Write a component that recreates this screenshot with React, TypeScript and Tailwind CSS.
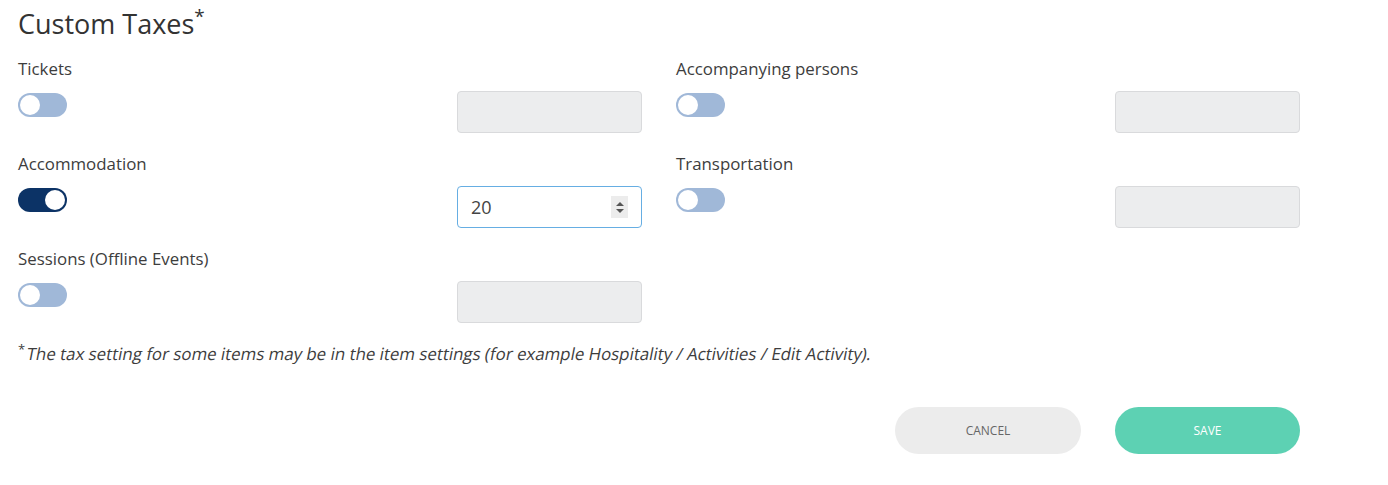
const font = { fontFamily: '"Open Sans", "Liberation Sans", sans-serif' };

type Item = { label: string; on?: boolean; value?: string };

const left: Item[] = [
  { label: "Tickets" },
  { label: "Accommodation", on: true, value: "20" },
  { label: "Sessions (Offline Events)" },
];

const right: Item[] = [{ label: "Accompanying persons" }, { label: "Transportation" }];

function Toggle({ on }: { on?: boolean }) {
  return (
    <div
      className={
        "mt-[2px] flex h-6 w-[49px] items-center rounded-full px-[2px] " +
        (on ? "justify-end bg-[#0c3366]" : "justify-start bg-[#a0b8d8]")
      }
    >
      <div className="h-5 w-5 rounded-full bg-white" />
    </div>
  );
}

function Field({ value }: { value?: string }) {
  if (value === undefined) {
    return <div className="h-[42px] w-[185px] rounded-[4px] border border-[#d9dadc] bg-[#ecedee]" />;
  }
  return (
    <div className="flex h-[42px] w-[185px] items-center justify-between rounded-[4px] border border-[#66aee3] bg-white pl-[13px] pr-[13px]">
      <span className="text-[18px] text-[#444]">{value}</span>
      <div className="flex h-[22px] w-[17px] flex-col items-center justify-center gap-[3px] bg-[#ececec]">
        <svg width="8" height="4" viewBox="0 0 8 4">
          <path d="M0 4 L4 0 L8 4 Z" fill="#555" />
        </svg>
        <svg width="8" height="4" viewBox="0 0 8 4">
          <path d="M0 0 L4 4 L8 0 Z" fill="#555" />
        </svg>
      </div>
    </div>
  );
}

function Row({ item }: { item: Item }) {
  return (
    <div className="flex flex-col">
      <div className="h-6 text-[16.85px] leading-6 text-[#3d3d3d]">{item.label}</div>
      <div className="mt-[10px] flex items-start justify-between">
        <Toggle on={item.on} />
        <Field value={item.value} />
      </div>
    </div>
  );
}

export default function App() {
  return (
    <div className="h-[485px] w-[1388px] bg-white pl-[18px] pr-[88px]" style={font}>
      <h1 className="pt-[6px] text-[27px] leading-[36px] font-normal text-[#333]">
        Custom Taxes<sup className="relative top-[-11px] text-[19px]">*</sup>
      </h1>
      <div className="mt-[15px] grid grid-cols-[624px_624px] gap-x-[34px]">
        <div className="flex flex-col gap-[19px]">
          {left.map((it) => (
            <Row key={it.label} item={it} />
          ))}
        </div>
        <div className="flex flex-col gap-[19px]">
          {right.map((it) => (
            <Row key={it.label} item={it} />
          ))}
        </div>
      </div>
      <p className="mt-[19px] flex items-start text-[16.85px] leading-6 text-[#3d3d3d]">
        <span className="relative top-[-5px] mr-[2px] text-[13px]">*</span>
        <span className="inline-block -skew-x-[11deg]">
          The tax setting for some items may be in the item settings (for example Hospitality / Activities / Edit Activity).
        </span>
      </p>
      <div className="mt-[41px] flex justify-end gap-[34px]">
        <button className="h-[47px] w-[186px] rounded-full bg-[#ececec] text-[12px] text-[#666] uppercase">
          Cancel
        </button>
        <button className="h-[47px] w-[185px] rounded-full bg-[#5dd1b3] text-[12px] text-white uppercase">
          Save
        </button>
      </div>
    </div>
  );
}
